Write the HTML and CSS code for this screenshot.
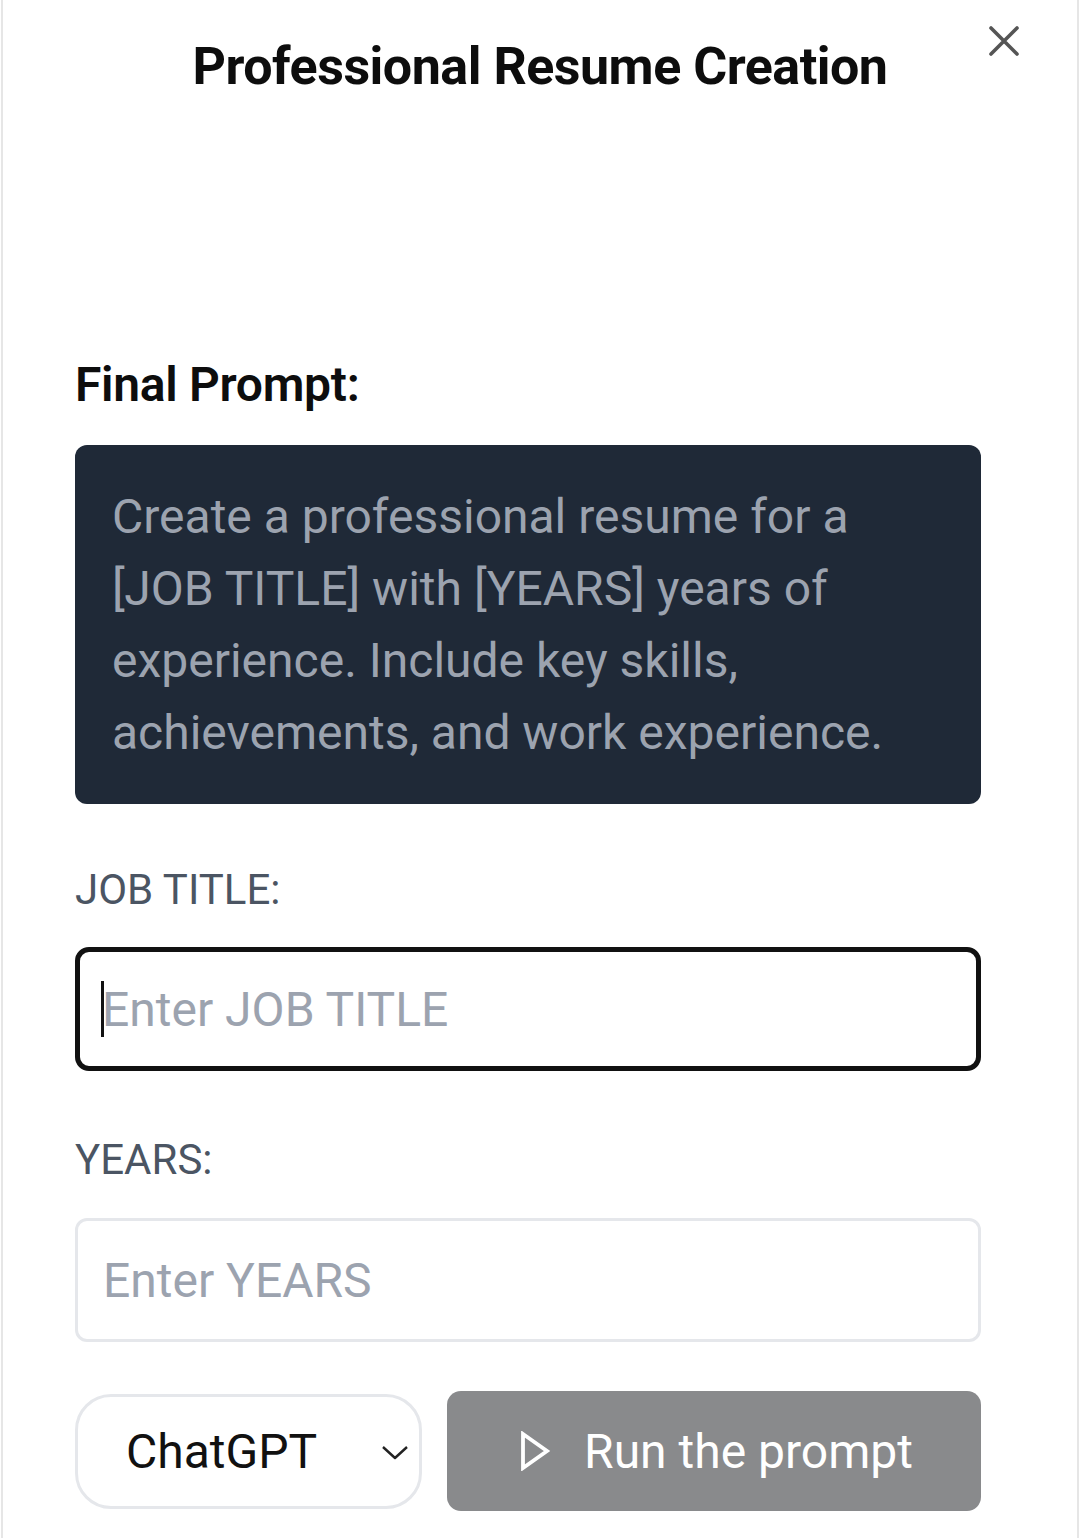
FILE: index.html
```html
<!DOCTYPE html>
<html lang="en">
<head>
<meta charset="utf-8">
<title>Professional Resume Creation</title>
<link rel="stylesheet" href="styles.css">
</head>
<body>
<div class="modal">
  <header class="header">
    <h1 class="title">Professional Resume Creation</h1>
    <button class="close" aria-label="Close">
      <svg width="34" height="34" viewBox="0 0 34 34"><path d="M4 4 L30 30 M30 4 L4 30" stroke="#555" stroke-width="3.6" stroke-linecap="round" fill="none"/></svg>
    </button>
  </header>

  <main class="content">
    <h2 class="section-title">Final Prompt:</h2>
    <div class="prompt-box">Create a professional resume for a [JOB TITLE] with [YEARS] years of experience. Include key skills, achievements, and work experience.</div>

    <label class="field-label label-job" for="job">JOB TITLE:</label>
    <div class="input-wrap">
      <input id="job" class="text-input focused" type="text" placeholder="Enter JOB TITLE">
      <span class="caret"></span>
    </div>

    <label class="field-label label-years" for="years">YEARS:</label>
    <div class="input-wrap">
      <input id="years" class="text-input" type="text" placeholder="Enter YEARS">
    </div>

    <div class="actions">
      <div class="select">
        <span class="select-text">ChatGPT</span>
        <svg class="chevron" width="28" height="16" viewBox="0 0 28 16"><path d="M2 2 L14 13 L26 2" stroke="#222" stroke-width="2.4" fill="none" stroke-linejoin="round"/></svg>
      </div>
      <button class="run">
        <svg class="play" width="32" height="40" viewBox="0 0 32 40"><path d="M4 3 L28 20 L4 37 Z" stroke="#fff" stroke-width="3.8" fill="none" stroke-linejoin="miter"/></svg>
        <span>Run the prompt</span>
      </button>
    </div>
  </main>
</div>
</body>
</html>
```

FILE: styles.css
```css
* { box-sizing: border-box; }
html, body { margin: 0; padding: 0; background: #fff; }
body { font-family: Roboto, "Noto Sans", Arial, sans-serif; }

.modal {
  position: relative;
  margin: 0 1px;
  min-height: 1538px;
  border-left: 2px solid #e6e6e6;
  border-right: 2px solid #e6e6e6;
  background: #fff;
}

.header {
  padding-top: 35px;
  text-align: center;
}
.title {
  margin: 0;
  font-size: 52px;
  line-height: 64px;
  font-weight: 700;
  color: #0d0d0d;
  letter-spacing: -0.5px;
}
.close {
  position: absolute;
  top: 24px;
  right: 56px;
  width: 34px;
  height: 34px;
  padding: 0;
  border: 0;
  background: transparent;
}
.close svg { display: block; }

.content {
  padding: 0 96px 0 72px;
}
.section-title {
  margin: 250px 0 0;
  font-size: 48px;
  line-height: 72px;
  font-weight: 600;
  color: #0d0d0d;
  letter-spacing: -0.3px;
}
.prompt-box {
  margin-top: 24px;
  background: #1f2937;
  border-radius: 12px;
  padding: 36px 36px 35px 37px;
  font-size: 48px;
  line-height: 72px;
  color: #9ca3af;
}
.field-label {
  display: block;
  font-size: 42px;
  line-height: 63px;
  color: #4b5563;
}
.label-job { margin-top: 54px; }
.label-years { margin-top: 57px; }

.input-wrap {
  position: relative;
  margin-top: 26px;
}
.label-years + .input-wrap { margin-top: 27px; }
.text-input {
  display: block;
  width: 100%;
  height: 124px;
  padding: 0 24px 0 25px;
  border: 3px solid #e5e7eb;
  border-radius: 12px;
  font-family: Roboto, "Noto Sans", Arial, sans-serif;
  font-size: 48px;
  color: #111;
  background: #fff;
  outline: none;
}
.text-input.focused {
  border: 5px solid #111;
  border-radius: 14px;
  padding-left: 22px;
}
.text-input::placeholder { color: #9ca3af; opacity: 1; }
.caret {
  position: absolute;
  left: 26px;
  top: 34px;
  width: 3px;
  height: 56px;
  background: #111;
}

.actions {
  display: flex;
  align-items: center;
  gap: 25px;
  margin-top: 49px;
}
.select {
  flex: 0 0 347px;
  height: 115px;
  border: 3px solid #e5e7eb;
  border-radius: 36px;
  display: flex;
  align-items: center;
  justify-content: space-between;
  padding: 0 10px 0 48px;
}
.select-text {
  font-size: 48px;
  color: #111;
}
.chevron { display: block; margin-top: 4px; }
.run {
  flex: 1;
  height: 120px;
  border: 0;
  border-radius: 14px;
  background: #898a8c;
  color: #fff;
  display: flex;
  align-items: center;
  justify-content: center;
  gap: 33px;
  font-family: Roboto, "Noto Sans", Arial, sans-serif;
  font-size: 48px;
  padding: 0 0 0 4px;
}
.play { display: block; }
```
